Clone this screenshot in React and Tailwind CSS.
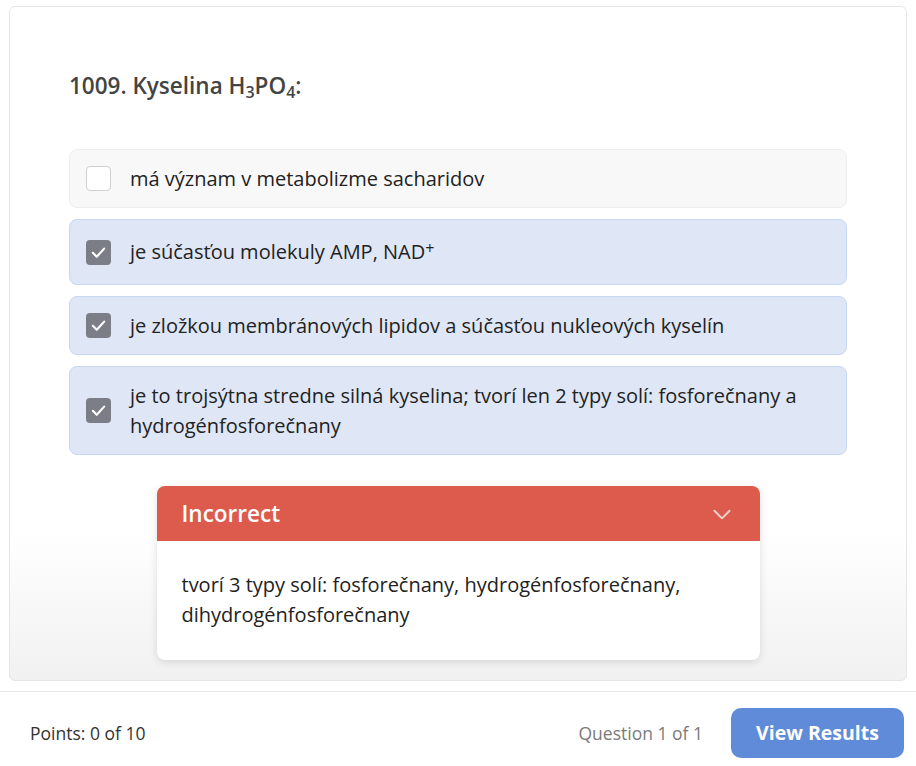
import React from "react";

const options = [
  { text: "má význam v metabolizme sacharidov", checked: false },
  {
    text: (
      <>
        je súčasťou molekuly AMP, NAD
        <sup className="text-[16px] relative -top-[5px]">+</sup>
      </>
    ),
    checked: true,
    tall: true,
  },
  { text: "je zložkou membránových lipidov a súčasťou nukleových kyselín", checked: true },
  {
    text: "je to trojsýtna stredne silná kyselina; tvorí len 2 typy solí: fosforečnany a hydrogénfosforečnany",
    checked: true,
  },
];

export default function App() {
  return (
    <div
      className="min-h-[766px] bg-white text-[#222]"
      style={{ fontFamily: '"Open Sans", "Noto Sans", sans-serif' }}
    >
      <div className="pt-[6px] px-[9px]">
        <div className="border border-[#e6e6e6] rounded-[6px] bg-gradient-to-b from-white from-[78%] to-[#f1f1f1] px-[59px] pt-[64px] pb-[20px]">
          <h1 className="text-[22.5px] font-semibold text-[#444] leading-[30px]">
            1009. Kyselina H<sub className="text-[16px]">3</sub>PO
            <sub className="text-[16px]">4</sub>:
          </h1>

          <div className="mt-[48px] flex flex-col gap-[11px]">
            {options.map((o, i) => (
              <Option key={i} {...o} />
            ))}
          </div>

          <div className="mt-[31px] mx-auto w-[603px] rounded-[8px] overflow-hidden bg-white shadow-[0_2px_8px_rgba(0,0,0,0.12)]">
            <div className="h-[55px] bg-[#dc5b4d] px-[25px] flex items-center justify-between">
              <span className="text-white text-[22.5px] font-semibold">Incorrect</span>
              <svg width="26" height="26" viewBox="0 0 24 24" fill="none" stroke="#f6d3cf" strokeWidth="1.8" strokeLinecap="round" strokeLinejoin="round">
                <polyline points="5 9 12 16 19 9" />
              </svg>
            </div>
            <div className="px-[25px] pt-[29px] pb-[30px] text-[20px] leading-[30px] text-[#222]">
              tvorí 3 typy solí: fosforečnany, hydrogénfosforečnany, dihydrogénfosforečnany
            </div>
          </div>
        </div>
      </div>

      <div className="mt-[10px] border-t border-[#e8e8e8] flex items-center justify-between pl-[30px] pr-[12px] pt-[16px]">
        <span className="text-[17.5px] text-[#333]">Points: 0 of 10</span>
        <div className="flex items-center gap-[28px]">
          <span className="text-[17.5px] text-[#7a7a7a]">Question 1 of 1</span>
          <button className="h-[50px] w-[173px] rounded-[10px] bg-[#5f8bd9] text-white text-[19.5px] font-bold">
            View Results
          </button>
        </div>
      </div>
    </div>
  );
}

function Option({ text, checked, tall }) {
  return (
    <div
      className={
        "flex items-center gap-[19px] rounded-[8px] border pl-[16px] pr-[16px] text-[20px] leading-[30px] " +
        (tall ? "py-[17px] " : "py-[13.5px] ") +
        (checked ? "bg-[#dfe7f6] border-[#c7d6f1]" : "bg-[#f8f8f8] border-[#eeeeee]")
      }
    >
      {checked ? (
        <div className="w-[25px] h-[25px] shrink-0 rounded-[4px] bg-[#7b7e86] flex items-center justify-center">
          <svg width="17" height="17" viewBox="0 0 24 24" fill="none" stroke="white" strokeWidth="3" strokeLinecap="round" strokeLinejoin="round">
            <polyline points="4 12.5 9.5 18 20 6.5" />
          </svg>
        </div>
      ) : (
        <div className="w-[25px] h-[25px] shrink-0 rounded-[4px] bg-white border border-[#cfcfcf]" />
      )}
      <span className="text-[#222]">{text}</span>
    </div>
  );
}
